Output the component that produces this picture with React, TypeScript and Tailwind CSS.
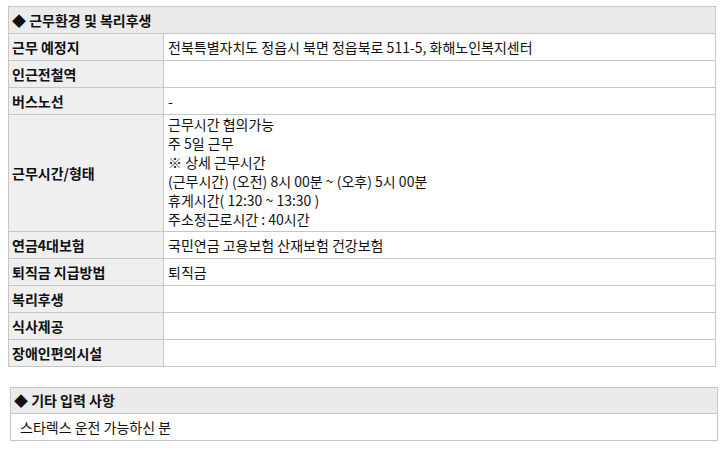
import React from "react";

const rows: { label: string; value: string[] }[] = [
  { label: "근무 예정지", value: ["전북특별자치도 정읍시 북면 정읍북로 511-5, 화해노인복지센터"] },
  { label: "인근전철역", value: [] },
  { label: "버스노선", value: ["-"] },
  {
    label: "근무시간/형태",
    value: [
      "근무시간 협의가능",
      "주 5일 근무",
      "※ 상세 근무시간",
      "(근무시간) (오전) 8시 00분 ~ (오후) 5시 00분",
      "휴게시간( 12:30 ~ 13:30 )",
      "주소정근로시간 : 40시간",
    ],
  },
  { label: "연금4대보험", value: ["국민연금 고용보험 산재보험 건강보험"] },
  { label: "퇴직금 지급방법", value: ["퇴직금"] },
  { label: "복리후생", value: [] },
  { label: "식사제공", value: [] },
  { label: "장애인편의시설", value: [] },
];

export default function App() {
  return (
    <div className="min-h-[453px] bg-white pt-[6px] text-[14px] leading-[19px] text-[#111] font-['Noto_Sans_CJK_KR','Noto_Sans',sans-serif]">
      {/* 근무환경 및 복리후생 */}
      <table className="ml-[8px] w-[708px] table-fixed border border-[#c6c6c6]">
        <colgroup>
          <col className="w-[155px]" />
          <col />
        </colgroup>
        <thead>
          <tr>
            <th
              colSpan={2}
              className="h-[27px] border border-[#c6c6c6] bg-[#ebebeb] px-[3px] text-left font-bold"
            >
              ◆ 근무환경 및 복리후생
            </th>
          </tr>
        </thead>
        <tbody>
          {rows.map((r) => (
            <tr key={r.label}>
              <th className="h-[27px] border border-[#c6c6c6] bg-[#efefef] px-[3px] text-left font-bold">
                {r.label}
              </th>
              <td
                className={
                  r.value.length > 1
                    ? "border border-[#c6c6c6] px-[4px] pt-0 pb-[2px] align-middle"
                    : "border border-[#c6c6c6] px-[4px] py-[3px] align-middle"
                }
              >
                {r.value.map((line, i) => (
                  <div key={i}>{line}</div>
                ))}
              </td>
            </tr>
          ))}
        </tbody>
      </table>

      {/* 기타 입력 사항 */}
      <table className="ml-[10px] mt-[20px] w-[708px] border border-[#c6c6c6]">
        <tbody>
          <tr>
            <th className="h-[26px] border border-[#c6c6c6] bg-[#ebebeb] px-[3px] text-left font-bold">
              ◆ 기타 입력 사항
            </th>
          </tr>
          <tr>
            <td className="h-[27px] border border-[#c6c6c6] px-[9px]">스타렉스 운전 가능하신 분</td>
          </tr>
        </tbody>
      </table>
    </div>
  );
}
